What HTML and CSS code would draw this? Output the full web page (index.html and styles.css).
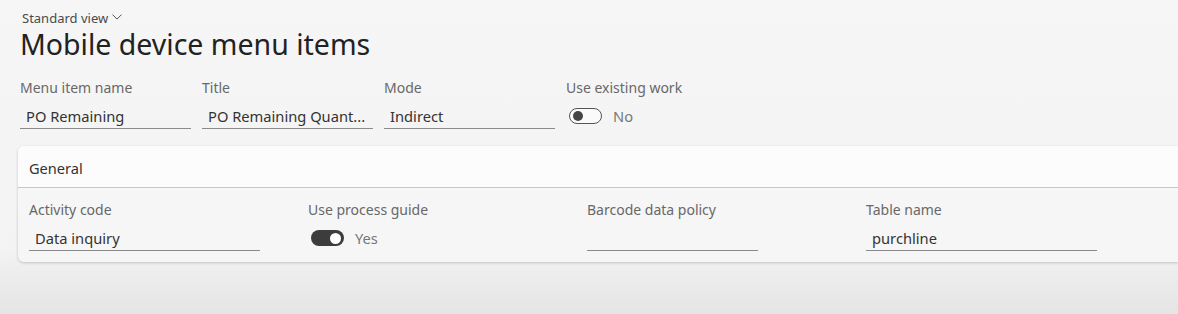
FILE: index.html
```
<!DOCTYPE html>
<html>
<head>
  <title>Mobile device menu items</title>
  <link rel="stylesheet" href="styles.css">
</head>
<body>
  <div class="page">
    <div class="view">Standard view
      <svg class="chev" width="10" height="6" viewBox="0 0 10 6"><path d="M0.5 0.6 L5 5.1 L9.5 0.6" fill="none" stroke="#555" stroke-width="1"/></svg>
    </div>
    <h1>Mobile device menu items</h1>

    <div class="top-fields">
      <div class="field">
        <label>Menu item name</label>
        <div class="input">PO Remaining</div>
      </div>
      <div class="field">
        <label>Title</label>
        <div class="input">PO Remaining Quant...</div>
      </div>
      <div class="field">
        <label>Mode</label>
        <div class="input">Indirect</div>
      </div>
      <div class="field">
        <label>Use existing work</label>
        <div class="toggle-row">
          <span class="toggle off"><span class="knob"></span></span>
          <span class="toggle-text">No</span>
        </div>
      </div>
    </div>

    <div class="card">
      <div class="card-head">General</div>
      <div class="card-body">
        <div class="field">
          <label>Activity code</label>
          <div class="input">Data inquiry</div>
        </div>
        <div class="field">
          <label>Use process guide</label>
          <div class="toggle-row">
            <span class="toggle on"><span class="knob"></span></span>
            <span class="toggle-text">Yes</span>
          </div>
        </div>
        <div class="field">
          <label>Barcode data policy</label>
          <div class="input short"></div>
        </div>
        <div class="field">
          <label>Table name</label>
          <div class="input">purchline</div>
        </div>
      </div>
    </div>
  </div>
</body>
</html>
```

FILE: styles.css
```
html {
  font-family: 'Noto Sans', 'Open Sans', sans-serif;
}

body {
  margin: 0;
  height: 314px;
  overflow: hidden;
  background: linear-gradient(#f6f6f6 0px, #f3f3f3 250px, #eaeaea 285px, #e5e5e5 314px);
  color: #333;
}

.page {
  padding: 8px 0 0 20px;
}

.view {
  font-size: 13px;
  color: #4a4a4a;
  margin-left: 2px;
  height: 20px;
  line-height: 20px;
}

.chev {
  vertical-align: 3px;
}

h1 {
  font-size: 28.5px;
  font-weight: 400;
  color: #222;
  margin: 1px 0 0 0;
  line-height: 30px;
}

.top-fields {
  display: flex;
  gap: 11px;
  margin-top: 20px;
}

.top-fields .field {
  width: 171px;
}

.field label {
  display: block;
  font-size: 14px;
  color: #686868;
  line-height: 18px;
  white-space: nowrap;
}

.input {
  font-size: 14.7px;
  color: #333;
  padding: 9px 6px 2px 6px;
  height: 20px;
  line-height: 20px;
  border-bottom: 1px solid #8a8a8a;
  white-space: nowrap;
}

.toggle-row {
  display: flex;
  align-items: center;
  gap: 11px;
  margin-top: 9px;
  padding-left: 3px;
  height: 20px;
}

.toggle {
  display: inline-flex;
  align-items: center;
  width: 33px;
  height: 16px;
  border-radius: 9px;
  box-sizing: border-box;
}

.toggle.off {
  border: 1px solid #555;
  background: #fafafa;
  padding-left: 3px;
}

.toggle.off .knob {
  width: 10px;
  height: 10px;
  border-radius: 50%;
  background: #444;
}

.toggle.on {
  background: #3c3c3c;
  justify-content: flex-end;
  padding-right: 3px;
}

.toggle.on .knob {
  width: 11px;
  height: 11px;
  border-radius: 50%;
  background: #fff;
}

.toggle-text {
  font-size: 14.7px;
  color: #777;
}

.card {
  margin-top: 17px;
  margin-left: -2px;
  border-radius: 6px 0 0 6px;
  background: #f6f6f6;
  box-shadow: 0 1px 3px rgba(0, 0, 0, 0.2);
  overflow: hidden;
}

.card-head {
  background: #fcfcfc;
  height: 41px;
  line-height: 44px;
  padding-left: 11px;
  font-size: 14.6px;
  color: #333;
  border-bottom: 1px solid #c8c8c8;
}

.card-body {
  display: flex;
  padding: 13px 0 11px 11px;
}

.card-body .field {
  width: 279px;
}

.card-body .input {
  width: 219px;
}

.card-body .input.short {
  width: 159px;
}
```
